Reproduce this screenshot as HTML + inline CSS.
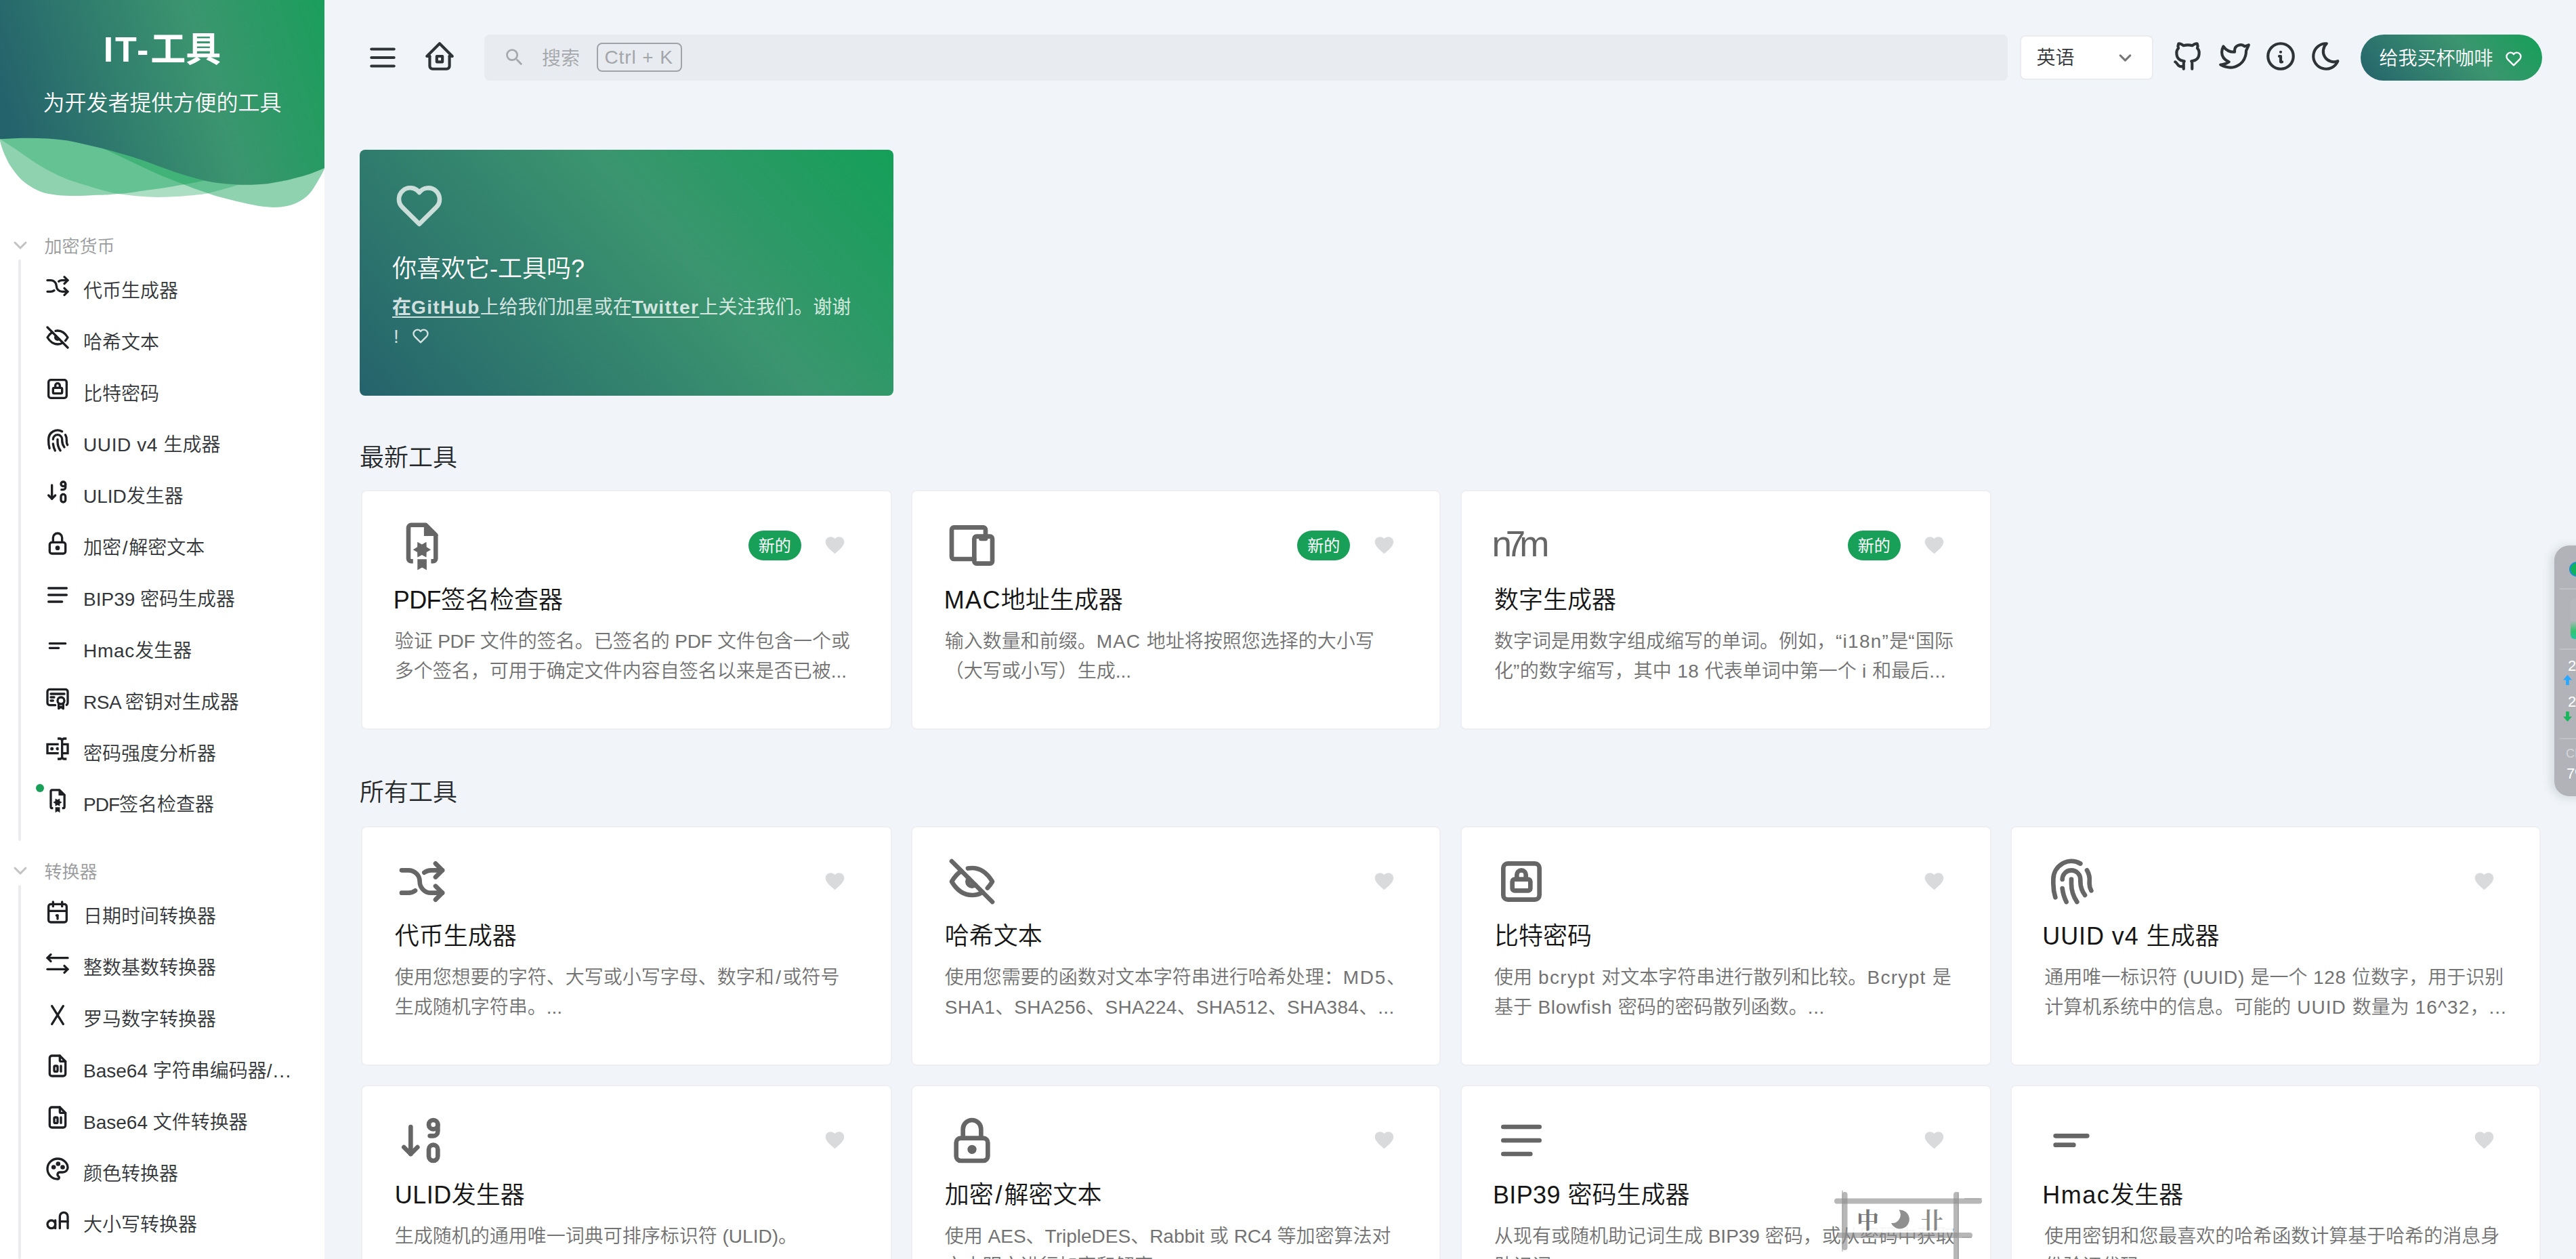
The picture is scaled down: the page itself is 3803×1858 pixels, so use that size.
<!DOCTYPE html><html lang="zh-CN"><head><meta charset="utf-8"><title>IT-工具 - 为开发者提供方便的工具</title><style>
html,body{margin:0;padding:0}
body{width:3803px;height:1858px;overflow:hidden;background:#f1f5f9;position:relative;font-family:"Liberation Sans","Noto Sans CJK SC",sans-serif;color:#333639;font-weight:350}
.a{position:absolute;box-sizing:border-box}
.t{position:absolute;white-space:nowrap}
svg{display:block}
#sider{position:absolute;left:0;top:0;width:479px;height:1858px;background:#fff;overflow:hidden}
.card{position:absolute;box-sizing:border-box;background:#fff;border:2px solid #efeff3;border-radius:8px;width:784px;height:354px;overflow:hidden}
.card .ttl{position:absolute;left:48px;white-space:nowrap;font-size:36px;line-height:56px;color:#151515}
.card .dsc{position:absolute;left:48px;white-space:nowrap;font-size:28px;line-height:44.7px;color:#727272}
.badge{position:absolute;box-sizing:border-box;background:#18a058;color:#fff;border-radius:22px;font-size:24px;line-height:46.5px;text-align:center;font-weight:400}
b.l{font-weight:700;text-decoration:underline;text-decoration-thickness:2px;text-underline-offset:4px}
</style></head><body>
<aside id="sider">
<svg class="a" style="left:0;top:0" width="479" height="330" viewBox="0 0 479 330">
<defs><linearGradient id="hg" gradientUnits="userSpaceOnUse" x1="-33.5" y1="10" x2="479" y2="-143.5">
<stop offset="0" stop-color="#25636c"/><stop offset="0.559" stop-color="#3b956f"/><stop offset="1" stop-color="#14a058"/></linearGradient></defs>
<path d="M0 0H479V249C476 256 470 266 464 276C456 290 442 300 424 304C410 307 396 306 382 304C360 300 338 294 318 289C290 280 262 269 233 257C205 244 180 232 152 219C100 200 40 190 0 190Z" fill="rgb(30,165,95)" fill-opacity="0.5"/>
<path d="M0 0H479V240C440 250 395 262 351 273C338 277 324 281 306 285.5C292 288 262 290.5 233 291C215 291 195 289 171 285.6C150 281 125 273 100 265C80 257 60 246 40 232C24 220 10 212 0 205Z" fill="rgb(30,165,95)" fill-opacity="0.37"/>
<path d="M0 0H479V240C430 245 370 255 321 263C300 267 285 270 271 272.3C250 276 232 279 218 280.4C200 283 190 285 174 286C160 287.5 150 288 144 287.8C125 289 110 289.3 97 288.8C80 288 68 286 58 282C45 276 36 270 29 262.6C20 252 14 244 10 235C5 225 2 216 0 208Z" fill="rgb(30,165,95)" fill-opacity="0.5"/>
<path d="M0 0H479V248C468 253 455 258 439 262C425 266 418 267 410 268.6C398 271 390 272 380 272.3C370 273 360 273 351 272.6C340 272 332 271 321 270C310 268.5 302 266.5 292 264C277 260 262 255.5 247.5 250C232 244.5 218 239 203 234C186 228.5 170 224 152 219.2C135 215 118 211 100 207.4C66 203 33 203 0 205.3Z" fill="url(#hg)"/>
</svg>
<div class="t " style="left:0px;top:38.2px;font-size:52px;line-height:70px;color:#fff;font-weight:700;width:479px;text-align:center;"><span style="letter-spacing:3px">IT-</span>工具</div>
<div class="t " style="left:0px;top:126.54px;font-size:32px;line-height:50px;color:#fff;font-weight:350;width:479px;text-align:center;">为开发者提供方便的工具</div>
<div class="a" style="left:14.2px;top:346px;width:32px;height:32px"><svg width="32" height="32" viewBox="0 0 24 24" fill="none" stroke="#c2c2c2" stroke-width="2.2" stroke-linecap="round" stroke-linejoin="round" ><path d="M6 9l6 6l6 -6"/></svg></div>
<div class="t " style="left:65.5px;top:343.82px;font-size:26px;line-height:40px;color:#999a9c;font-weight:350;">加密货币</div>
<div class="a " style="left:27.2px;top:382.5px;width:3.7px;height:858.5px;background:#ececef;border-radius:2px"></div>
<div class="a" style="left:65.25px;top:402.4px;width:40px;height:40px"><svg width="40" height="40" viewBox="0 0 24 24" fill="none" stroke="#1d1f22" stroke-width="2" stroke-linecap="round" stroke-linejoin="round" ><path d="M18 4l3 3l-3 3"/><path d="M18 20l3 -3l-3 -3"/><path d="M3 7h3a5 5 0 0 1 5 5a5 5 0 0 0 5 5h5"/><path d="M21 7h-5a4.978 4.978 0 0 0 -3 1m-4 8a4.984 4.984 0 0 1 -3 1h-3"/></svg></div>
<div class="t " style="left:123px;top:407.86px;font-size:28px;line-height:44px;color:#333639;font-weight:350;">代币生成器</div>
<div class="a" style="left:65.25px;top:478.25px;width:40px;height:40px"><svg width="40" height="40" viewBox="0 0 24 24" fill="none" stroke="#1d1f22" stroke-width="2" stroke-linecap="round" stroke-linejoin="round" ><path d="M10.585 10.587a2 2 0 0 0 2.829 2.828"/><path d="M16.681 16.673a8.717 8.717 0 0 1 -4.681 1.327c-3.6 0 -6.6 -2 -9 -6c1.272 -2.12 2.712 -3.678 4.32 -4.674m2.86 -1.146a9.055 9.055 0 0 1 1.82 -.18c3.6 0 6.6 2 9 6c-.666 1.11 -1.379 2.067 -2.138 2.87"/><path d="M3 3l18 18"/></svg></div>
<div class="t " style="left:123px;top:483.71px;font-size:28px;line-height:44px;color:#333639;font-weight:350;">哈希文本</div>
<div class="a" style="left:65.25px;top:554.1px;width:40px;height:40px"><svg width="40" height="40" viewBox="0 0 24 24" fill="none" stroke="#1d1f22" stroke-width="2" stroke-linecap="round" stroke-linejoin="round" ><path d="M8 11m0 1a1 1 0 0 1 1 -1h6a1 1 0 0 1 1 1v3a1 1 0 0 1 -1 1h-6a1 1 0 0 1 -1 -1z"/><path d="M10 11v-2a2 2 0 1 1 4 0v2"/><path d="M4 4m0 2a2 2 0 0 1 2 -2h12a2 2 0 0 1 2 2v12a2 2 0 0 1 -2 2h-12a2 2 0 0 1 -2 -2z"/></svg></div>
<div class="t " style="left:123px;top:559.56px;font-size:28px;line-height:44px;color:#333639;font-weight:350;">比特密码</div>
<div class="a" style="left:65.25px;top:629.95px;width:40px;height:40px"><svg width="40" height="40" viewBox="0 0 24 24" fill="none" stroke="#1d1f22" stroke-width="2" stroke-linecap="round" stroke-linejoin="round" ><path d="M18.9 7a8 8 0 0 1 1.1 5v1a6 6 0 0 0 .8 3"/><path d="M8 11a4 4 0 0 1 8 0v1a10 10 0 0 0 2 6"/><path d="M12 11v2a14 14 0 0 0 2.5 8"/><path d="M8 15a18 18 0 0 0 1.8 6"/><path d="M4.9 19a22 22 0 0 1 -.9 -7v-1a8 8 0 0 1 12 -6.95"/></svg></div>
<div class="t " style="left:123px;top:635.41px;font-size:28px;line-height:44px;color:#333639;font-weight:350;"><span style="letter-spacing:0.6px;">UUID v4 </span>生成器</div>
<div class="a" style="left:65.25px;top:705.8px;width:40px;height:40px"><svg width="40" height="40" viewBox="0 0 24 24" fill="none" stroke="#1d1f22" stroke-width="2" stroke-linecap="round" stroke-linejoin="round" ><path d="M4 15l3 3l3 -3"/><path d="M7 6v12"/><path d="M17 14a2 2 0 0 1 2 2v3a2 2 0 1 1 -4 0v-3a2 2 0 0 1 2 -2z"/><path d="M17 5m-2 0a2 2 0 1 0 4 0a2 2 0 1 0 -4 0"/><path d="M19 5v3a2 2 0 0 1 -2 2h-1.5"/></svg></div>
<div class="t " style="left:123px;top:711.26px;font-size:28px;line-height:44px;color:#333639;font-weight:350;">ULID发生器</div>
<div class="a" style="left:65.25px;top:781.65px;width:40px;height:40px"><svg width="40" height="40" viewBox="0 0 24 24" fill="none" stroke="#1d1f22" stroke-width="2" stroke-linecap="round" stroke-linejoin="round" ><path d="M5 13a2 2 0 0 1 2 -2h10a2 2 0 0 1 2 2v6a2 2 0 0 1 -2 2h-10a2 2 0 0 1 -2 -2v-6z"/><path d="M11 16a1 1 0 1 0 2 0a1 1 0 0 0 -2 0"/><path d="M8 11v-4a4 4 0 1 1 8 0v4"/></svg></div>
<div class="t " style="left:123px;top:787.11px;font-size:28px;line-height:44px;color:#333639;font-weight:350;">加密<span style="letter-spacing:0px;padding:0 1.7px">/</span>解密文本</div>
<div class="a" style="left:65.25px;top:857.5px;width:40px;height:40px"><svg width="40" height="40" viewBox="0 0 24 24" fill="none" stroke="#1d1f22" stroke-width="2" stroke-linecap="round" stroke-linejoin="round" ><path d="M4 6l16 0"/><path d="M4 12l16 0"/><path d="M4 18l12 0"/></svg></div>
<div class="t " style="left:123px;top:862.96px;font-size:28px;line-height:44px;color:#333639;font-weight:350;">BIP39 密码生成器</div>
<div class="a" style="left:65.25px;top:933.35px;width:40px;height:40px"><svg width="40" height="40" viewBox="0 0 24 24" fill="#1d1f22" ><path d="M5 9h14a1 1 0 0 1 0 2H5a1 1 0 0 1 0-2zm0 4h8a1 1 0 0 1 0 2H5a1 1 0 0 1 0-2z"/></svg></div>
<div class="t " style="left:123px;top:938.81px;font-size:28px;line-height:44px;color:#333639;font-weight:350;"><span style="letter-spacing:0.75px;">Hmac</span>发生器</div>
<div class="a" style="left:65.25px;top:1009.2px;width:40px;height:40px"><svg width="40" height="40" viewBox="0 0 24 24" fill="none" stroke="#1d1f22" stroke-width="2" stroke-linecap="round" stroke-linejoin="round" ><path d="M15 15m-3 0a3 3 0 1 0 6 0a3 3 0 1 0 -6 0"/><path d="M13 17.5v4.5l2 -1.5l2 1.5v-4.5"/><path d="M10 19h-5a2 2 0 0 1 -2 -2v-10c0 -1.1 .9 -2 2 -2h14a2 2 0 0 1 2 2v10a2 2 0 0 1 -1 1.73"/><path d="M6 9l12 0"/><path d="M6 12l3 0"/><path d="M6 15l2 0"/></svg></div>
<div class="t " style="left:123px;top:1014.66px;font-size:28px;line-height:44px;color:#333639;font-weight:350;"><span style="letter-spacing:-0.5px;">RSA </span>密钥对生成器</div>
<div class="a" style="left:65.25px;top:1085.05px;width:40px;height:40px"><svg width="40" height="40" viewBox="0 0 24 24" fill="#1d1f22" ><path d="M17,7H22V17H17V19A1,1 0 0,0 18,20H20V22H17.5C16.95,22 16,21.55 16,21C16,21.55 15.05,22 14.5,22H12V20H14A1,1 0 0,0 15,19V5A1,1 0 0,0 14,4H12V2H14.5C15.05,2 16,2.45 16,3C16,2.45 16.95,2 17.5,2H20V4H18A1,1 0 0,0 17,5V7M2,7H13V9H4V15H13V17H2V7M20,15V9H17V15H20M8.5,12A1.5,1.5 0 0,0 7,10.5A1.5,1.5 0 0,0 5.5,12A1.5,1.5 0 0,0 7,13.5A1.5,1.5 0 0,0 8.5,12M13,10.89C12.39,10.33 11.44,10.38 10.88,11C10.32,11.6 10.37,12.55 11,13.11C11.55,13.63 12.43,13.63 13,13.11V10.89Z"/></svg></div>
<div class="t " style="left:123px;top:1090.51px;font-size:28px;line-height:44px;color:#333639;font-weight:350;">密码强度分析器</div>
<div class="a" style="left:65.25px;top:1160.9px;width:40px;height:40px"><svg width="40" height="40" viewBox="0 0 80 80"><path d="M26.8 63.3H24a4 4 0 0 1-4-4V13.8a4 4 0 0 1 4-4h21.5L60.3 24.5V59.3a4 4 0 0 1-4 4H53.4" fill="none" stroke="#1d1f22" stroke-width="6.6" stroke-linejoin="round"/><path d="M42.9 7.5H46.4L63.6 24.5V26.1H42.9Z" fill="#1d1f22"/><polygon points="53.1,46.2 46.7,42.3 46.5,34.8 39.9,38.4 33.3,34.8 33.1,42.3 26.7,46.2 33.1,50.1 33.3,57.6 39.9,54.0 46.5,57.6 46.7,50.1" fill="#1d1f22"/><path d="M33.3 60.3H46.9V76.3L40.1 72.6L33.3 76.3Z" fill="#1d1f22"/></svg></div>
<div class="t " style="left:123px;top:1166.36px;font-size:28px;line-height:44px;color:#333639;font-weight:350;"><span style="letter-spacing:-1px;">PDF</span>签名检查器</div>
<div class="a " style="left:52.8px;top:1157px;width:12px;height:12px;background:#18a058;border-radius:50%"></div>
<div class="a" style="left:14.2px;top:1269px;width:32px;height:32px"><svg width="32" height="32" viewBox="0 0 24 24" fill="none" stroke="#c2c2c2" stroke-width="2.2" stroke-linecap="round" stroke-linejoin="round" ><path d="M6 9l6 6l6 -6"/></svg></div>
<div class="t " style="left:65.5px;top:1266.82px;font-size:26px;line-height:40px;color:#999a9c;font-weight:350;">转换器</div>
<div class="a " style="left:27.2px;top:1306px;width:3.7px;height:552px;background:#ececef;border-radius:2px"></div>
<div class="a" style="left:65.25px;top:1325.8px;width:40px;height:40px"><svg width="40" height="40" viewBox="0 0 24 24" fill="none" stroke="#1d1f22" stroke-width="2" stroke-linecap="round" stroke-linejoin="round" ><path d="M4 7a2 2 0 0 1 2 -2h12a2 2 0 0 1 2 2v12a2 2 0 0 1 -2 2h-12a2 2 0 0 1 -2 -2v-12z"/><path d="M16 3v4"/><path d="M8 3v4"/><path d="M4 11h16"/><path d="M11 15h1"/><path d="M12 15v3"/></svg></div>
<div class="t " style="left:123px;top:1331.26px;font-size:28px;line-height:44px;color:#333639;font-weight:350;">日期时间转换器</div>
<div class="a" style="left:65.25px;top:1401.65px;width:40px;height:40px"><svg width="40" height="40" viewBox="0 0 24 24" fill="none" stroke="#1d1f22" stroke-width="2" stroke-linecap="round" stroke-linejoin="round" ><path d="M21 17l-18 0"/><path d="M6 10l-3 -3l3 -3"/><path d="M3 7l18 0"/><path d="M18 20l3 -3l-3 -3"/></svg></div>
<div class="t " style="left:123px;top:1407.11px;font-size:28px;line-height:44px;color:#333639;font-weight:350;">整数基数转换器</div>
<div class="a" style="left:65.25px;top:1477.5px;width:40px;height:40px"><svg width="40" height="40" viewBox="0 0 24 24" fill="none" stroke="#1d1f22" stroke-width="2" stroke-linecap="round" stroke-linejoin="round" ><path d="M7 4l10 16"/><path d="M17 4l-10 16"/></svg></div>
<div class="t " style="left:123px;top:1482.96px;font-size:28px;line-height:44px;color:#333639;font-weight:350;">罗马数字转换器</div>
<div class="a" style="left:65.25px;top:1553.35px;width:40px;height:40px"><svg width="40" height="40" viewBox="0 0 24 24" fill="none" stroke="#1d1f22" stroke-width="2" stroke-linecap="round" stroke-linejoin="round" ><path d="M14 3v4a1 1 0 0 0 1 1h4"/><path d="M9 12m0 1a1 1 0 0 1 1 -1h1a1 1 0 0 1 1 1v3a1 1 0 0 1 -1 1h-1a1 1 0 0 1 -1 -1z"/><path d="M17 21h-10a2 2 0 0 1 -2 -2v-14a2 2 0 0 1 2 -2h7l5 5v11a2 2 0 0 1 -2 2z"/><path d="M15 12v5"/></svg></div>
<div class="t " style="left:123px;top:1558.81px;font-size:28px;line-height:44px;color:#333639;font-weight:350;">Base64 字符串编码器<span style="letter-spacing:1.5px;">/...</span></div>
<div class="a" style="left:65.25px;top:1629.2px;width:40px;height:40px"><svg width="40" height="40" viewBox="0 0 24 24" fill="none" stroke="#1d1f22" stroke-width="2" stroke-linecap="round" stroke-linejoin="round" ><path d="M14 3v4a1 1 0 0 0 1 1h4"/><path d="M9 12m0 1a1 1 0 0 1 1 -1h1a1 1 0 0 1 1 1v3a1 1 0 0 1 -1 1h-1a1 1 0 0 1 -1 -1z"/><path d="M17 21h-10a2 2 0 0 1 -2 -2v-14a2 2 0 0 1 2 -2h7l5 5v11a2 2 0 0 1 -2 2z"/><path d="M15 12v5"/></svg></div>
<div class="t " style="left:123px;top:1634.66px;font-size:28px;line-height:44px;color:#333639;font-weight:350;">Base64 文件转换器</div>
<div class="a" style="left:65.25px;top:1705.05px;width:40px;height:40px"><svg width="40" height="40" viewBox="0 0 24 24" fill="none" stroke="#1d1f22" stroke-width="2" stroke-linecap="round" stroke-linejoin="round" ><path d="M12 21a9 9 0 0 1 0 -18c4.97 0 9 3.582 9 8c0 1.06 -.474 2.078 -1.318 2.828c-.844 .75 -1.989 1.172 -3.182 1.172h-2.5a2 2 0 0 0 -1 3.75a1.3 1.3 0 0 1 -1 2.25"/><path d="M8.5 10.5m-1 0a1 1 0 1 0 2 0a1 1 0 1 0 -2 0"/><path d="M12.5 7.5m-1 0a1 1 0 1 0 2 0a1 1 0 1 0 -2 0"/><path d="M16.5 10.5m-1 0a1 1 0 1 0 2 0a1 1 0 1 0 -2 0"/></svg></div>
<div class="t " style="left:123px;top:1710.51px;font-size:28px;line-height:44px;color:#333639;font-weight:350;">颜色转换器</div>
<div class="a" style="left:65.25px;top:1780.9px;width:40px;height:40px"><svg width="40" height="40" viewBox="0 0 24 24" fill="none" stroke="#1d1f22" stroke-width="2" stroke-linecap="round" stroke-linejoin="round" ><path d="M6.5 15.5m-3.5 0a3.5 3.5 0 1 0 7 0a3.5 3.5 0 1 0 -7 0"/><path d="M14 19v-10.5a3.5 3.5 0 0 1 7 0v10.5"/><path d="M14 13h7"/><path d="M10 12v7"/></svg></div>
<div class="t " style="left:123px;top:1786.36px;font-size:28px;line-height:44px;color:#333639;font-weight:350;">大小写转换器</div>
</aside>
<div class="a" style="left:540px;top:60px;width:50px;height:50px"><svg width="50" height="50" viewBox="0 0 24 24" fill="none" stroke="#2e3338" stroke-width="2" stroke-linecap="round" stroke-linejoin="round" ><path d="M4 6l16 0"/><path d="M4 12l16 0"/><path d="M4 18l16 0"/></svg></div>
<div class="a" style="left:624px;top:58px;width:50px;height:50px"><svg width="50" height="50" viewBox="0 0 24 24" fill="none" stroke="#2e3338" stroke-width="2" stroke-linecap="round" stroke-linejoin="round" ><path d="M5 12l-2 0l9 -9l9 9l-2 0"/><path d="M5 12v7a2 2 0 0 0 2 2h10a2 2 0 0 0 2 -2v-7"/><path d="M10 12h4v4h-4z"/></svg></div>
<div class="a " style="left:715px;top:50.5px;width:2249px;height:68px;background:#e8ebef;border-radius:8px"></div>
<div class="a" style="left:742.8px;top:67.5px;width:33px;height:33px"><svg width="33" height="33" viewBox="0 0 24 24" fill="#a5a8ac" ><path d="M9.5,3A6.5,6.5 0 0,1 16,9.5C16,11.11 15.41,12.59 14.44,13.73L14.71,14H15.5L20.5,19L19,20.5L14,15.5V14.71L13.73,14.44C12.59,15.41 11.11,16 9.5,16A6.5,6.5 0 0,1 3,9.5A6.5,6.5 0 0,1 9.5,3M9.5,5C7,5 5,7 5,9.5C5,12 7,14 9.5,14C12,14 14,12 14,9.5C14,7 12,5 9.5,5Z"/></svg></div>
<div class="t " style="left:800px;top:64.96px;font-size:28px;line-height:44px;color:#a3a6aa;font-weight:350;">搜索</div>
<div class="a " style="left:881px;top:63.3px;width:126px;height:43.2px;border:2px solid #a0a3a7;border-radius:8px"></div>
<div class="t " style="left:892.5px;top:63.46px;font-size:28px;line-height:44px;color:#a3a6aa;font-weight:350;letter-spacing:0.9px;">Ctrl + K</div>
<div class="a " style="left:2982.4px;top:52px;width:197px;height:66px;background:#fff;border:2px solid #ebebf0;border-radius:8px"></div>
<div class="t " style="left:3006.5px;top:64.46px;font-size:28px;line-height:44px;color:#333639;font-weight:350;">英语</div>
<div class="a" style="left:3123px;top:70.7px;width:29px;height:29px"><svg width="29" height="29" viewBox="0 0 24 24" fill="none" stroke="#777" stroke-width="2.6" stroke-linecap="round" stroke-linejoin="round" ><path d="M6 9l6 6l6 -6"/></svg></div>
<div class="a" style="left:3205px;top:58px;width:50px;height:50px"><svg width="50" height="50" viewBox="0 0 24 24" fill="none" stroke="#2e3338" stroke-width="2" stroke-linecap="round" stroke-linejoin="round" ><path d="M9 19c-4.3 1.4 -4.3 -2.5 -6 -3m12 5v-3.5c0 -1 .1 -1.4 -.5 -2c2.8 -.3 5.5 -1.4 5.5 -6a4.6 4.6 0 0 0 -1.3 -3.2a4.2 4.2 0 0 0 -.1 -3.2s-1.1 -.3 -3.5 1.3a12.3 12.3 0 0 0 -6.2 0c-2.4 -1.6 -3.5 -1.3 -3.5 -1.3a4.2 4.2 0 0 0 -.1 3.2a4.6 4.6 0 0 0 -1.3 3.2c0 4.6 2.7 5.7 5.5 6c-.6 .6 -.6 1.2 -.5 2v3.5"/></svg></div>
<div class="a" style="left:3274px;top:58px;width:50px;height:50px"><svg width="50" height="50" viewBox="0 0 24 24" fill="none" stroke="#2e3338" stroke-width="2" stroke-linecap="round" stroke-linejoin="round" ><path d="M22 4.01c-1 .49 -1.98 .689 -3 .99c-1.121 -1.265 -2.783 -1.335 -4.38 -.737s-2.643 2.06 -2.62 3.737v1c-3.245 .083 -6.135 -1.395 -8 -4c0 0 -4.182 7.433 4 11c-1.872 1.247 -3.739 2.088 -6 2c3.308 1.803 6.913 2.423 10.034 1.517c3.58 -1.04 6.522 -3.723 7.651 -7.742a13.84 13.84 0 0 0 .497 -3.753c0 -.249 1.51 -2.772 1.818 -4.013z"/></svg></div>
<div class="a" style="left:3342px;top:58px;width:50px;height:50px"><svg width="50" height="50" viewBox="0 0 24 24" fill="none" stroke="#2e3338" stroke-width="2" stroke-linecap="round" stroke-linejoin="round" ><path d="M3 12a9 9 0 1 0 18 0a9 9 0 0 0 -18 0"/><path d="M12 9h.01"/><path d="M11 12h1v4h1"/></svg></div>
<div class="a" style="left:3409px;top:58px;width:50px;height:50px"><svg width="50" height="50" viewBox="0 0 24 24" fill="none" stroke="#2e3338" stroke-width="2" stroke-linecap="round" stroke-linejoin="round" ><path d="M12 3c.132 0 .263 0 .393 0a7.5 7.5 0 0 0 7.92 12.446a9 9 0 1 1 -8.313 -12.454z"/></svg></div>
<div class="a " style="left:3485px;top:51px;width:268px;height:68px;border-radius:34px;background:linear-gradient(48deg,#25636c 0%,#3b956f 60%,#14a058 100%)"></div>
<div class="t " style="left:3512.5px;top:64.96px;font-size:28px;line-height:44px;color:#fff;font-weight:350;">给我买杯咖啡</div>
<div class="a" style="left:3696.8px;top:72.5px;width:28px;height:28px"><svg width="28" height="28" viewBox="0 0 24 24" fill="none" stroke="#fff" stroke-width="2" stroke-linecap="round" stroke-linejoin="round" ><path d="M19.5 12.572l-7.5 7.428l-7.5 -7.428a5 5 0 1 1 7.5 -6.566a5 5 0 1 1 7.5 6.572"/></svg></div>
<div class="a " style="left:531px;top:221px;width:788px;height:363px;border-radius:8px;background:linear-gradient(48deg,#25636c 0%,#3b956f 60%,#14a058 100%)"></div>
<div class="a" style="left:578.8px;top:263.5px;width:80px;height:80px"><svg width="80" height="80" viewBox="0 0 24 24" fill="none" stroke="rgba(255,255,255,0.75)" stroke-width="2" stroke-linecap="round" stroke-linejoin="round" ><path d="M19.5 12.572l-7.5 7.428l-7.5 -7.428a5 5 0 1 1 7.5 -6.566a5 5 0 1 1 7.5 6.572"/></svg></div>
<div class="t " style="left:579px;top:368.52px;font-size:36px;line-height:56px;color:#fff;font-weight:350;">你喜欢它-工具吗?</div>
<div class="t " style="left:579px;top:432.46px;font-size:28px;line-height:44px;color:rgba(255,255,255,0.8);font-weight:400;"><b class="l">在<span style="letter-spacing:1.4px">GitHub</span></b>上给我们加星或在<b class="l"><span style="letter-spacing:1.4px">Twitter</span></b>上关注我们。谢谢</div>
<div class="t " style="left:581px;top:475.26px;font-size:28px;line-height:44px;color:rgba(255,255,255,0.8);font-weight:350;">!</div>
<div class="a" style="left:607.2px;top:481.5px;width:28px;height:28px"><svg width="28" height="28" viewBox="0 0 24 24" fill="none" stroke="rgba(255,255,255,0.8)" stroke-width="2" stroke-linecap="round" stroke-linejoin="round" ><path d="M19.5 12.572l-7.5 7.428l-7.5 -7.428a5 5 0 1 1 7.5 -6.566a5 5 0 1 1 7.5 6.572"/></svg></div>
<div class="t " style="left:531px;top:648.22px;font-size:36px;line-height:56px;color:#26292c;font-weight:350;">最新工具</div>
<div class="t " style="left:531px;top:1142.02px;font-size:36px;line-height:56px;color:#26292c;font-weight:350;">所有工具</div>
<div class="card" style="left:532.75px;top:723px;width:784.05px"><div class="a" style="left:48px;top:40px;width:80px;height:80px"><svg width="80" height="80" viewBox="0 0 80 80"><path d="M26.8 63.3H24a4 4 0 0 1-4-4V13.8a4 4 0 0 1 4-4h21.5L60.3 24.5V59.3a4 4 0 0 1-4 4H53.4" fill="none" stroke="#666666" stroke-width="6.6" stroke-linejoin="round"/><path d="M42.9 7.5H46.4L63.6 24.5V26.1H42.9Z" fill="#666666"/><polygon points="53.1,46.2 46.7,42.3 46.5,34.8 39.9,38.4 33.3,34.8 33.1,42.3 26.7,46.2 33.1,50.1 33.3,57.6 39.9,54.0 46.5,57.6 46.7,50.1" fill="#666666"/><path d="M33.3 60.3H46.9V76.3L40.1 72.6L33.3 76.3Z" fill="#666666"/></svg></div><div class="a" style="left:681.55px;top:62.7px;width:33px;height:33px"><svg width="33" height="33" viewBox="0 0 24 24" fill="#d8dadb" ><path d="M12 21.35l-1.45-1.32C5.4 15.36 2 12.28 2 8.5C2 5.42 4.42 3 7.5 3c1.74 0 3.41.81 4.5 2.09C13.09 3.81 14.76 3 16.5 3C19.58 3 22 5.42 22 8.5c0 3.78-3.4 6.86-8.55 11.54L12 21.35z"/></svg></div><div class="badge" style="left:569.8px;top:57.9px;width:78.2px;height:44.2px">新的</div><div class="ttl" style="top:133.1px"><span style="letter-spacing:-0.6px;margin-left:-2px">PDF</span>签名检查器</div><div class="dsc" style="top:199.5px">验证<span style="letter-spacing:-0.3px;"> PDF </span>文件的签名。已签名的<span style="letter-spacing:-0.3px;"> PDF </span>文件包含一个或<br>多个签名，可用于确定文件内容自签名以来是否已被...</div></div>
<div class="card" style="left:1344.8px;top:723px;width:782.7px"><div class="a" style="left:48px;top:40px;width:80px;height:80px"><svg width="80" height="80" viewBox="0 0 24 24" fill="none" stroke="#666666" stroke-width="2" stroke-linecap="round" stroke-linejoin="round" ><path d="M13 9a1 1 0 0 1 1 -1h6a1 1 0 0 1 1 1v10a1 1 0 0 1 -1 1h-6a1 1 0 0 1 -1 -1v-10z"/><path d="M18 8v-3a1 1 0 0 0 -1 -1h-13a1 1 0 0 0 -1 1v12a1 1 0 0 0 1 1h9"/><path d="M16 9h2"/></svg></div><div class="a" style="left:680.2px;top:62.7px;width:33px;height:33px"><svg width="33" height="33" viewBox="0 0 24 24" fill="#d8dadb" ><path d="M12 21.35l-1.45-1.32C5.4 15.36 2 12.28 2 8.5C2 5.42 4.42 3 7.5 3c1.74 0 3.41.81 4.5 2.09C13.09 3.81 14.76 3 16.5 3C19.58 3 22 5.42 22 8.5c0 3.78-3.4 6.86-8.55 11.54L12 21.35z"/></svg></div><div class="badge" style="left:568.45px;top:57.9px;width:78.2px;height:44.2px">新的</div><div class="ttl" style="top:133.1px"><span style="letter-spacing:1.3px;margin-left:-1px">MAC</span>地址生成器</div><div class="dsc" style="top:199.5px">输入数量和前缀。<span style="letter-spacing:1px;">MAC </span>地址将按照您选择的大小写<br>（大写或小写）生成...</div></div>
<div class="card" style="left:2155.9px;top:723px;width:784px"><div class="a" style="left:48px;top:40px;width:80px;height:80px"><div style="font-size:53px;line-height:80px;letter-spacing:-9px;color:#666;white-space:nowrap;margin-left:-3.5px;margin-top:-2.5px;font-weight:400">n7m</div></div><div class="a" style="left:681.5px;top:62.7px;width:33px;height:33px"><svg width="33" height="33" viewBox="0 0 24 24" fill="#d8dadb" ><path d="M12 21.35l-1.45-1.32C5.4 15.36 2 12.28 2 8.5C2 5.42 4.42 3 7.5 3c1.74 0 3.41.81 4.5 2.09C13.09 3.81 14.76 3 16.5 3C19.58 3 22 5.42 22 8.5c0 3.78-3.4 6.86-8.55 11.54L12 21.35z"/></svg></div><div class="badge" style="left:569.75px;top:57.9px;width:78.2px;height:44.2px">新的</div><div class="ttl" style="top:133.1px">数字生成器</div><div class="dsc" style="top:199.5px">数字词是用数字组成缩写的单词。例如，<span style="letter-spacing:1.29px;">“i18n”</span>是<span style="letter-spacing:1.29px;">“</span>国际<br>化<span style="letter-spacing:0.55px;">”</span>的数字缩写，其中<span style="letter-spacing:0.55px;"> 18 </span>代表单词中第一个<span style="letter-spacing:0.55px;"> i </span>和最后<span style="letter-spacing:0.55px;">...</span></div></div>
<div class="card" style="left:532.75px;top:1219px;width:784.05px"><div class="a" style="left:48px;top:40px;width:80px;height:80px"><svg width="80" height="80" viewBox="0 0 24 24" fill="none" stroke="#666666" stroke-width="2" stroke-linecap="round" stroke-linejoin="round" ><path d="M18 4l3 3l-3 3"/><path d="M18 20l3 -3l-3 -3"/><path d="M3 7h3a5 5 0 0 1 5 5a5 5 0 0 0 5 5h5"/><path d="M21 7h-5a4.978 4.978 0 0 0 -3 1m-4 8a4.984 4.984 0 0 1 -3 1h-3"/></svg></div><div class="a" style="left:681.55px;top:62.7px;width:33px;height:33px"><svg width="33" height="33" viewBox="0 0 24 24" fill="#d8dadb" ><path d="M12 21.35l-1.45-1.32C5.4 15.36 2 12.28 2 8.5C2 5.42 4.42 3 7.5 3c1.74 0 3.41.81 4.5 2.09C13.09 3.81 14.76 3 16.5 3C19.58 3 22 5.42 22 8.5c0 3.78-3.4 6.86-8.55 11.54L12 21.35z"/></svg></div><div class="ttl" style="top:133.1px">代币生成器</div><div class="dsc" style="top:199.5px">使用您想要的字符、大写或小写字母、数字和<span style="letter-spacing:0px;padding:0 2.5px">/</span>或符号<br>生成随机字符串。...</div></div>
<div class="card" style="left:1344.8px;top:1219px;width:782.7px"><div class="a" style="left:48px;top:40px;width:80px;height:80px"><svg width="80" height="80" viewBox="0 0 24 24" fill="none" stroke="#666666" stroke-width="2" stroke-linecap="round" stroke-linejoin="round" ><path d="M10.585 10.587a2 2 0 0 0 2.829 2.828"/><path d="M16.681 16.673a8.717 8.717 0 0 1 -4.681 1.327c-3.6 0 -6.6 -2 -9 -6c1.272 -2.12 2.712 -3.678 4.32 -4.674m2.86 -1.146a9.055 9.055 0 0 1 1.82 -.18c3.6 0 6.6 2 9 6c-.666 1.11 -1.379 2.067 -2.138 2.87"/><path d="M3 3l18 18"/></svg></div><div class="a" style="left:680.2px;top:62.7px;width:33px;height:33px"><svg width="33" height="33" viewBox="0 0 24 24" fill="#d8dadb" ><path d="M12 21.35l-1.45-1.32C5.4 15.36 2 12.28 2 8.5C2 5.42 4.42 3 7.5 3c1.74 0 3.41.81 4.5 2.09C13.09 3.81 14.76 3 16.5 3C19.58 3 22 5.42 22 8.5c0 3.78-3.4 6.86-8.55 11.54L12 21.35z"/></svg></div><div class="ttl" style="top:133.1px">哈希文本</div><div class="dsc" style="top:199.5px">使用您需要的函数对文本字符串进行哈希处理：<span style="letter-spacing:1.67px;">MD5</span>、<br><span style="letter-spacing:0.32px;">SHA1</span>、<span style="letter-spacing:0.32px;">SHA256</span>、<span style="letter-spacing:0.32px;">SHA224</span>、<span style="letter-spacing:0.32px;">SHA512</span>、<span style="letter-spacing:0.32px;">SHA384</span>、<span style="letter-spacing:0.32px;">...</span></div></div>
<div class="card" style="left:2155.9px;top:1219px;width:784px"><div class="a" style="left:48px;top:40px;width:80px;height:80px"><svg width="80" height="80" viewBox="0 0 24 24" fill="none" stroke="#666666" stroke-width="2" stroke-linecap="round" stroke-linejoin="round" ><path d="M8 11m0 1a1 1 0 0 1 1 -1h6a1 1 0 0 1 1 1v3a1 1 0 0 1 -1 1h-6a1 1 0 0 1 -1 -1z"/><path d="M10 11v-2a2 2 0 1 1 4 0v2"/><path d="M4 4m0 2a2 2 0 0 1 2 -2h12a2 2 0 0 1 2 2v12a2 2 0 0 1 -2 2h-12a2 2 0 0 1 -2 -2z"/></svg></div><div class="a" style="left:681.5px;top:62.7px;width:33px;height:33px"><svg width="33" height="33" viewBox="0 0 24 24" fill="#d8dadb" ><path d="M12 21.35l-1.45-1.32C5.4 15.36 2 12.28 2 8.5C2 5.42 4.42 3 7.5 3c1.74 0 3.41.81 4.5 2.09C13.09 3.81 14.76 3 16.5 3C19.58 3 22 5.42 22 8.5c0 3.78-3.4 6.86-8.55 11.54L12 21.35z"/></svg></div><div class="ttl" style="top:133.1px">比特密码</div><div class="dsc" style="top:199.5px">使用<span style="letter-spacing:1.33px;"> bcrypt </span>对文本字符串进行散列和比较。<span style="letter-spacing:1.33px;">Bcrypt </span>是<br>基于<span style="letter-spacing:0.69px;"> Blowfish </span>密码的密码散列函数。<span style="letter-spacing:0.69px;">...</span></div></div>
<div class="card" style="left:2968.3px;top:1219px;width:782.8px"><div class="a" style="left:48px;top:40px;width:80px;height:80px"><svg width="80" height="80" viewBox="0 0 24 24" fill="none" stroke="#666666" stroke-width="2" stroke-linecap="round" stroke-linejoin="round" ><path d="M18.9 7a8 8 0 0 1 1.1 5v1a6 6 0 0 0 .8 3"/><path d="M8 11a4 4 0 0 1 8 0v1a10 10 0 0 0 2 6"/><path d="M12 11v2a14 14 0 0 0 2.5 8"/><path d="M8 15a18 18 0 0 0 1.8 6"/><path d="M4.9 19a22 22 0 0 1 -.9 -7v-1a8 8 0 0 1 12 -6.95"/></svg></div><div class="a" style="left:680.3px;top:62.7px;width:33px;height:33px"><svg width="33" height="33" viewBox="0 0 24 24" fill="#d8dadb" ><path d="M12 21.35l-1.45-1.32C5.4 15.36 2 12.28 2 8.5C2 5.42 4.42 3 7.5 3c1.74 0 3.41.81 4.5 2.09C13.09 3.81 14.76 3 16.5 3C19.58 3 22 5.42 22 8.5c0 3.78-3.4 6.86-8.55 11.54L12 21.35z"/></svg></div><div class="ttl" style="top:133.1px"><span style="letter-spacing:0.9px;margin-left:-3px">UUID v4 </span>生成器</div><div class="dsc" style="top:199.5px">通用唯一标识符<span style="letter-spacing:0.69px;"> (UUID) </span>是一个<span style="letter-spacing:0.69px;"> 128 </span>位数字，用于识别<br>计算机系统中的信息。可能的<span style="letter-spacing:1.07px;"> UUID </span>数量为<span style="letter-spacing:1.07px;"> 16^32</span>，<span style="letter-spacing:1.07px;">...</span></div></div>
<div class="card" style="left:532.75px;top:1601px;width:784.05px"><div class="a" style="left:48px;top:40px;width:80px;height:80px"><svg width="80" height="80" viewBox="0 0 24 24" fill="none" stroke="#666666" stroke-width="2" stroke-linecap="round" stroke-linejoin="round" ><path d="M4 15l3 3l3 -3"/><path d="M7 6v12"/><path d="M17 14a2 2 0 0 1 2 2v3a2 2 0 1 1 -4 0v-3a2 2 0 0 1 2 -2z"/><path d="M17 5m-2 0a2 2 0 1 0 4 0a2 2 0 1 0 -4 0"/><path d="M19 5v3a2 2 0 0 1 -2 2h-1.5"/></svg></div><div class="a" style="left:681.55px;top:62.7px;width:33px;height:33px"><svg width="33" height="33" viewBox="0 0 24 24" fill="#d8dadb" ><path d="M12 21.35l-1.45-1.32C5.4 15.36 2 12.28 2 8.5C2 5.42 4.42 3 7.5 3c1.74 0 3.41.81 4.5 2.09C13.09 3.81 14.76 3 16.5 3C19.58 3 22 5.42 22 8.5c0 3.78-3.4 6.86-8.55 11.54L12 21.35z"/></svg></div><div class="ttl" style="top:133.1px"><span style="letter-spacing:0.5px;margin-left:0px">ULID</span>发生器</div><div class="dsc" style="top:199.5px">生成随机的通用唯一词典可排序标识符 (ULID)。<br></div></div>
<div class="card" style="left:1344.8px;top:1601px;width:782.7px"><div class="a" style="left:48px;top:40px;width:80px;height:80px"><svg width="80" height="80" viewBox="0 0 24 24" fill="none" stroke="#666666" stroke-width="2" stroke-linecap="round" stroke-linejoin="round" ><path d="M5 13a2 2 0 0 1 2 -2h10a2 2 0 0 1 2 2v6a2 2 0 0 1 -2 2h-10a2 2 0 0 1 -2 -2v-6z"/><path d="M11 16a1 1 0 1 0 2 0a1 1 0 0 0 -2 0"/><path d="M8 11v-4a4 4 0 1 1 8 0v4"/></svg></div><div class="a" style="left:680.2px;top:62.7px;width:33px;height:33px"><svg width="33" height="33" viewBox="0 0 24 24" fill="#d8dadb" ><path d="M12 21.35l-1.45-1.32C5.4 15.36 2 12.28 2 8.5C2 5.42 4.42 3 7.5 3c1.74 0 3.41.81 4.5 2.09C13.09 3.81 14.76 3 16.5 3C19.58 3 22 5.42 22 8.5c0 3.78-3.4 6.86-8.55 11.54L12 21.35z"/></svg></div><div class="ttl" style="top:133.1px">加密<span style="letter-spacing:0px;padding:0 2.8px">/</span>解密文本</div><div class="dsc" style="top:199.5px">使用 AES、TripleDES、Rabbit 或 RC4 等加密算法对<br>文本明文进行加密和解密。</div></div>
<div class="card" style="left:2155.9px;top:1601px;width:784px"><div class="a" style="left:48px;top:40px;width:80px;height:80px"><svg width="80" height="80" viewBox="0 0 24 24" fill="none" stroke="#666666" stroke-width="2" stroke-linecap="round" stroke-linejoin="round" ><path d="M4 6l16 0"/><path d="M4 12l16 0"/><path d="M4 18l12 0"/></svg></div><div class="a" style="left:681.5px;top:62.7px;width:33px;height:33px"><svg width="33" height="33" viewBox="0 0 24 24" fill="#d8dadb" ><path d="M12 21.35l-1.45-1.32C5.4 15.36 2 12.28 2 8.5C2 5.42 4.42 3 7.5 3c1.74 0 3.41.81 4.5 2.09C13.09 3.81 14.76 3 16.5 3C19.58 3 22 5.42 22 8.5c0 3.78-3.4 6.86-8.55 11.54L12 21.35z"/></svg></div><div class="ttl" style="top:133.1px"><span style="letter-spacing:0.4px;margin-left:-2px">BIP39 </span>密码生成器</div><div class="dsc" style="top:199.5px">从现有或随机助记词生成 BIP39 密码，或从密码中获取<br>助记词。</div></div>
<div class="card" style="left:2968.3px;top:1601px;width:782.8px"><div class="a" style="left:48px;top:40px;width:80px;height:80px"><svg width="80" height="80" viewBox="0 0 24 24" fill="#666666" ><path d="M5 9h14a1 1 0 0 1 0 2H5a1 1 0 0 1 0-2zm0 4h8a1 1 0 0 1 0 2H5a1 1 0 0 1 0-2z"/></svg></div><div class="a" style="left:680.3px;top:62.7px;width:33px;height:33px"><svg width="33" height="33" viewBox="0 0 24 24" fill="#d8dadb" ><path d="M12 21.35l-1.45-1.32C5.4 15.36 2 12.28 2 8.5C2 5.42 4.42 3 7.5 3c1.74 0 3.41.81 4.5 2.09C13.09 3.81 14.76 3 16.5 3C19.58 3 22 5.42 22 8.5c0 3.78-3.4 6.86-8.55 11.54L12 21.35z"/></svg></div><div class="ttl" style="top:133.1px"><span style="letter-spacing:1.5px;margin-left:-3px">Hmac</span>发生器</div><div class="dsc" style="top:199.5px">使用密钥和您最喜欢的哈希函数计算基于哈希的消息身<br>份验证代码 (HMAC)。</div></div>
<div class="a" style="left:3771px;top:805px;width:60px;height:370px;background:#b1b3b9;border-radius:22px 0 0 22px;box-shadow:-4px 2px 14px rgba(60,70,90,0.18)"><div class="a" style="left:22px;top:24px;width:22px;height:22px;border-radius:50%;background:#10b35a;border:2px solid #1c8fd0"></div><div class="a" style="left:8px;top:63px;width:60px;height:2px;background:#bfc1c6"></div><div class="a" style="left:24px;top:78px;width:30px;height:60px;border-radius:6px;background:linear-gradient(#b5b7bd 55%,#35c46e 80%,#22c7a0)"></div><div class="a" style="left:8px;top:152px;width:60px;height:2px;background:#bfc1c6"></div><div class="t" style="left:20px;top:163px;font-size:22px;line-height:30px;color:#fff">2</div><svg class="a" style="left:12.5px;top:191px" width="13" height="15" viewBox="0 0 14 16"><path d="M7 0L14 8H9.5V16H4.5V8H0Z" fill="#2aa8ff"/></svg><div class="t" style="left:20px;top:216px;font-size:22px;line-height:30px;color:#fff">2</div><svg class="a" style="left:12.5px;top:245px" width="13" height="15" viewBox="0 0 14 16"><path d="M7 16L14 8H9.5V0H4.5V8H0Z" fill="#16b65b"/></svg><div class="a" style="left:8px;top:284px;width:60px;height:2px;background:#bfc1c6"></div><div class="t" style="left:17px;top:296px;font-size:18px;line-height:22px;color:#d4d5d9">CPU</div><div class="t" style="left:18px;top:322px;font-size:22px;line-height:30px;color:#fff">7%</div></div>
<div class="a" style="left:2728px;top:1777px;width:155px;height:42px;background:rgba(255,255,255,0.93)"></div><svg class="a" style="left:2700px;top:1755px" width="240" height="103" viewBox="0 0 240 103"><g fill="none" stroke="#8a8a8a" stroke-opacity="0.62" stroke-width="8" stroke-linecap="round"><path d="M12 17.5H222"/><path d="M16 68H208"/><path d="M23.5 8V86"/><path d="M188 8V103"/></g><g fill="none" stroke="#9a9a9a" stroke-opacity="0.5" stroke-width="2"><path d="M200 14H226"/><path d="M196 71H211"/><path d="M20 2V92"/><path d="M191 4V103"/></g><path d="M103.5 30.5a14 14 0 1 1 -11.5 19.5a12.5 12.5 0 0 0 11.5 -19.5z" fill="#8f8f8f"/></svg>
<div class="t" style="left:2741px;top:1777px;font-size:33px;line-height:44px;color:#777;font-weight:700;font-family:'Noto Serif CJK SC','Noto Sans CJK SC',serif">中</div>
<div class="t" style="left:2836px;top:1777px;font-size:33px;line-height:44px;color:#8a8a8a;font-weight:700;font-family:'Noto Serif CJK SC','Noto Sans CJK SC',serif">卝</div>
</body></html>
